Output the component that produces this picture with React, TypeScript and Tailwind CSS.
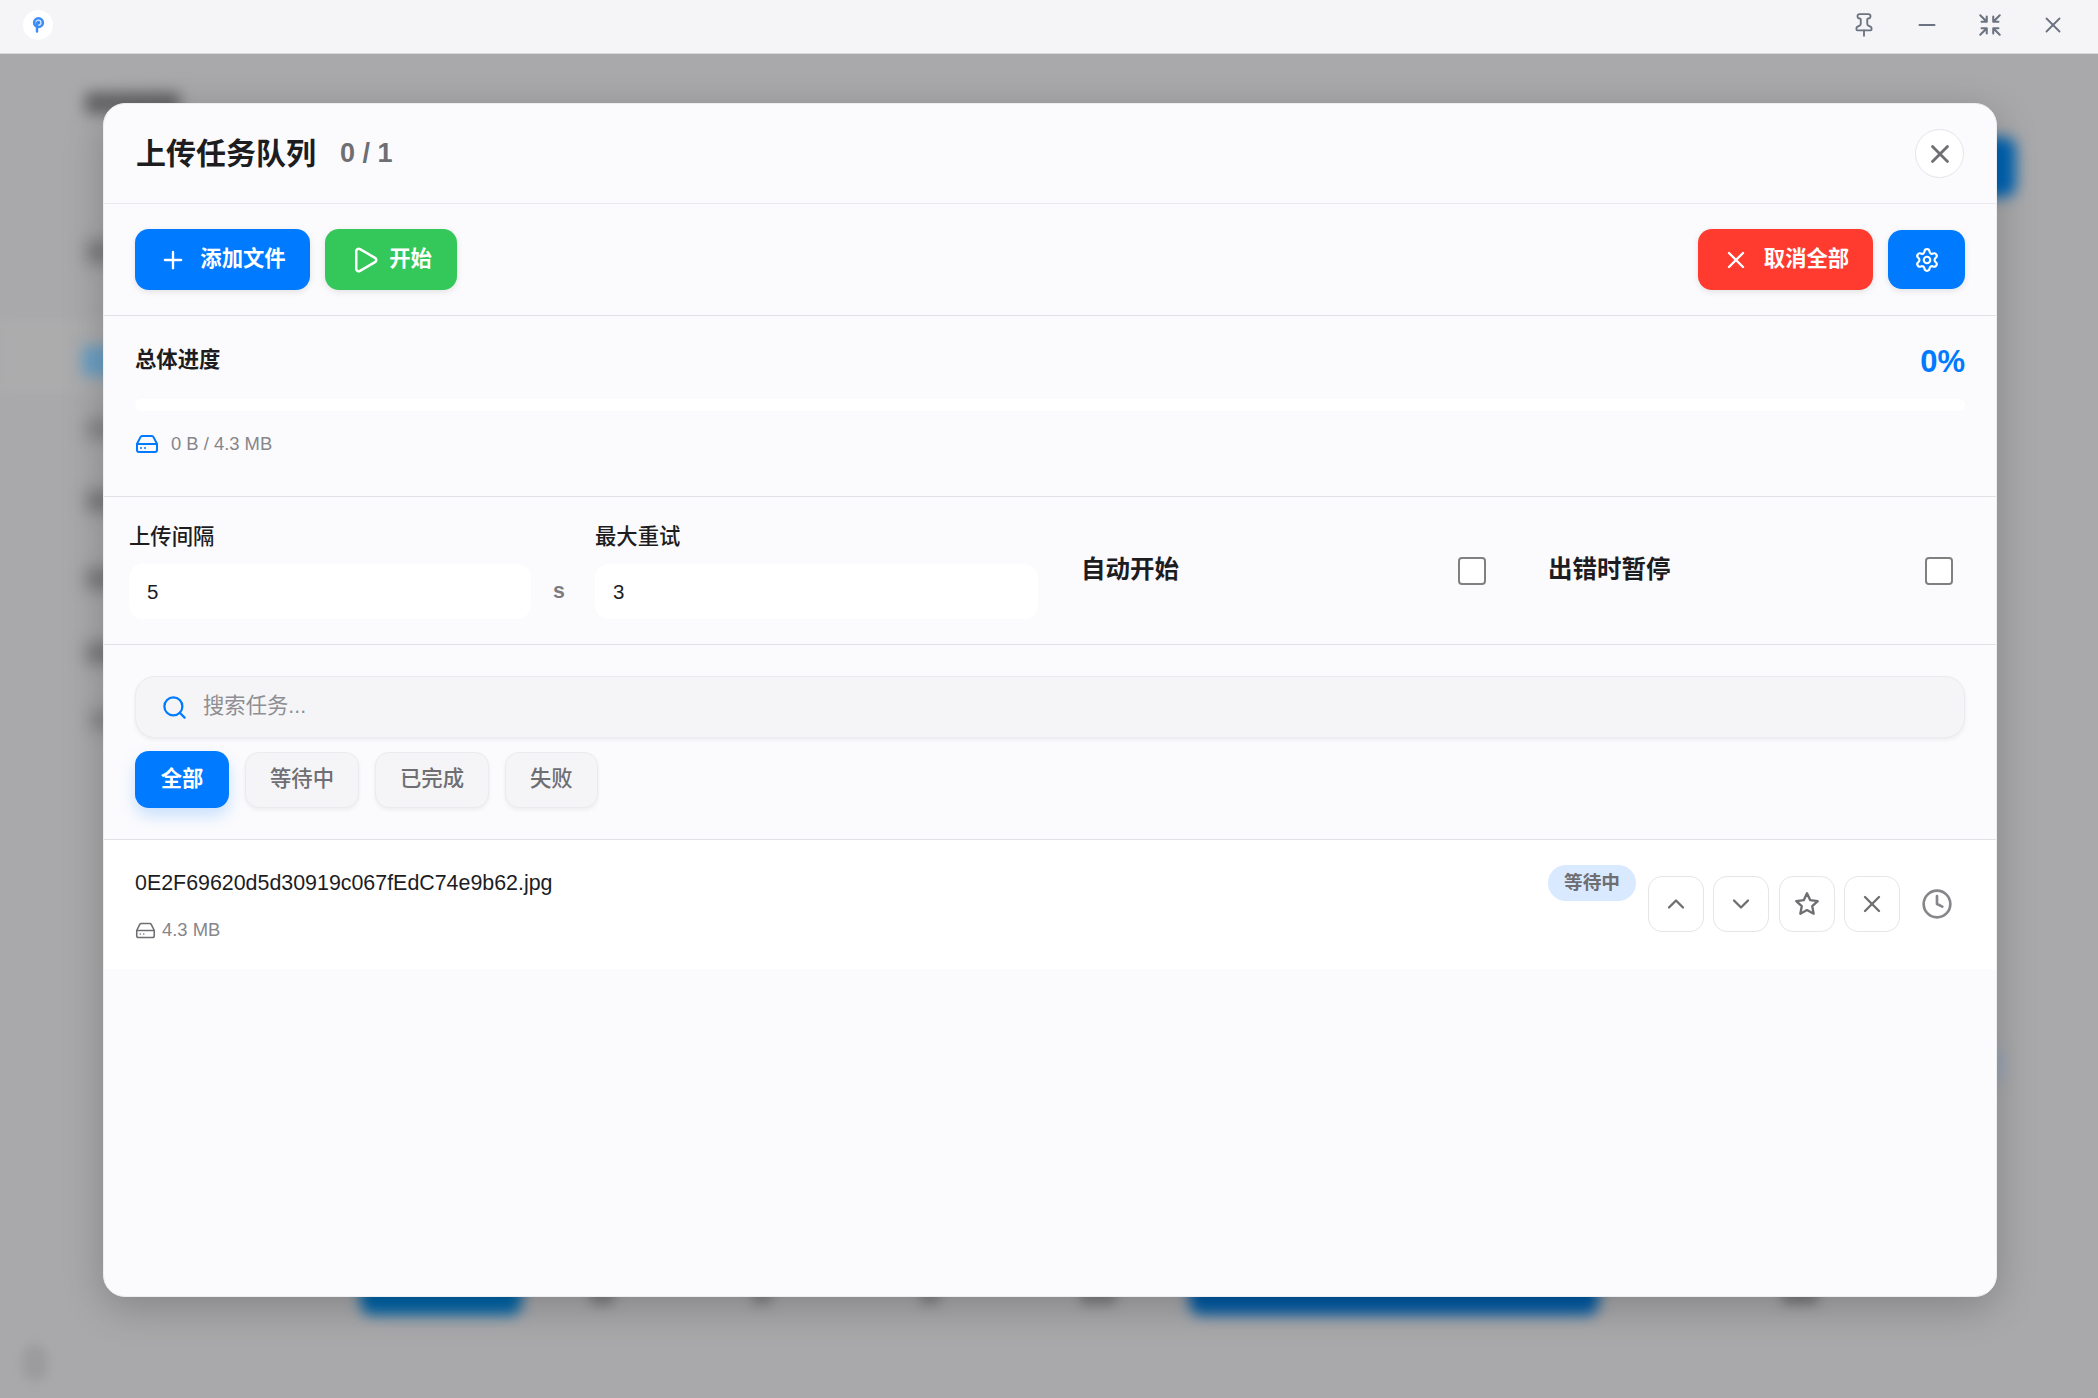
import { ChevronDown, ChevronUp, Clock, HardDrive, Minus, Pin, Play, Plus, Search, Settings, Shrink, X } from 'lucide-react';

const filters = ['等待中', '已完成', '失败'];

function TitleBar() {
  return (
    <div className="relative z-20 flex h-[54px] items-center justify-between border-b border-[#d9d9dc] bg-[#f5f5f7] pb-[4px] pl-[23px] pr-[32px]">
      <div className="flex h-[30px] w-[30px] items-center justify-center rounded-full bg-white">
        <svg viewBox="0 0 16 18" className="h-[17px] w-[15px]" fill="none">
          <circle cx="8" cy="7" r="6" fill="#3b8cf5" />
          <circle cx="8" cy="7" r="2.6" fill="none" stroke="#d5e7ff" strokeWidth="1.4" />
          <path d="M6.4 7v9.5" stroke="#3b8cf5" strokeWidth="2.6" strokeLinecap="round" />
        </svg>
      </div>
      <div className="flex items-center gap-[37px] text-[#6b7280]">
        <Pin className="h-[26px] w-[26px]" strokeWidth={1.7} />
        <Minus className="h-[26px] w-[26px]" strokeWidth={1.7} />
        <Shrink className="h-[26px] w-[26px]" strokeWidth={1.9} />
        <X className="h-[26px] w-[26px]" strokeWidth={1.7} />
      </div>
    </div>
  );
}

// blurred page behind the dialog
function BlurredPage() {
  return (
    <div className="absolute inset-0 overflow-hidden bg-[#a9a9ab]">
      <div className="absolute left-0 top-[318px] h-[76px] w-[110px] bg-[#acacad] blur-[6px]" />
      <div className="absolute left-[85px] top-[92px] h-[22px] w-[95px] rounded bg-[#666668] blur-[7px]" />
      <div className="absolute left-[86px] top-[240px] h-[24px] w-[40px] rounded bg-[#7e7e80] blur-[8px]" />
      <div className="absolute left-[82px] top-[346px] h-[30px] w-[40px] rounded bg-[#6a9fc4] blur-[7px]" />
      <div className="absolute left-[86px] top-[418px] h-[22px] w-[40px] rounded bg-[#88888a] blur-[8px]" />
      <div className="absolute left-[86px] top-[490px] h-[22px] w-[40px] rounded bg-[#7c7c7e] blur-[8px]" />
      <div className="absolute left-[86px] top-[568px] h-[22px] w-[40px] rounded bg-[#7a7a7c] blur-[8px]" />
      <div className="absolute left-[86px] top-[642px] h-[22px] w-[40px] rounded bg-[#7a7a7c] blur-[8px]" />
      <div className="absolute left-[90px] top-[710px] h-[20px] w-[30px] rounded bg-[#88888a] blur-[8px]" />
      <div className="absolute left-[1960px] top-[137px] h-[60px] w-[56px] rounded-xl bg-[#0064b4] blur-[7px]" />
      <div className="absolute left-[1985px] top-[1050px] h-[32px] w-[18px] rounded bg-[#98a4b8] blur-[7px]" />
      <div className="absolute left-[360px] top-[1270px] h-[45px] w-[162px] rounded-xl bg-[#0064a8] blur-[7px]" />
      <div className="absolute left-[1189px] top-[1270px] h-[45px] w-[410px] rounded-xl bg-[#005aa4] blur-[7px]" />
      <div className="absolute left-[590px] top-[1285px] h-[20px] w-[24px] rounded bg-[#808082] blur-[6px]" />
      <div className="absolute left-[752px] top-[1285px] h-[20px] w-[20px] rounded bg-[#858587] blur-[6px]" />
      <div className="absolute left-[920px] top-[1285px] h-[20px] w-[20px] rounded bg-[#858587] blur-[6px]" />
      <div className="absolute left-[1080px] top-[1285px] h-[20px] w-[36px] rounded bg-[#808082] blur-[6px]" />
      <div className="absolute left-[1782px] top-[1285px] h-[20px] w-[36px] rounded bg-[#7c7c7e] blur-[6px]" />
      <div className="absolute left-[22px] top-[1345px] h-[36px] w-[26px] rounded-full bg-[#9c9c9e] blur-[5px]" />
    </div>
  );
}

function IconButton({ children }: { children: React.ReactNode }) {
  return (
    <button className="flex h-[56px] w-[56px] items-center justify-center rounded-[14px] border border-[#e5e5ea] bg-white text-[#6e6e73]">
      {children}
    </button>
  );
}

function Star({ className }: { className: string }) {
  return (
    <svg className={className} viewBox="0 0 24 24" fill="none" stroke="currentColor" strokeWidth={2} strokeLinejoin="round" strokeLinecap="round">
      <path d="M12 2.8l2.8 5.9 6.4.8-4.7 4.4 1.2 6.4-5.7-3.1-5.7 3.1 1.2-6.4-4.7-4.4 6.4-.8z" />
    </svg>
  );
}

function UploadDialog() {
  return (
    <div className="flex h-[1194px] w-[1894px] flex-col overflow-hidden rounded-[22px] border border-[#eeeef1] bg-[#fbfbfd] shadow-[0_10px_40px_rgba(0,0,0,0.22)]">
      {/* Header */}
      <div className="flex h-[100px] flex-none items-center justify-between border-b border-[#e9e9ee] pl-[32px] pr-[32px]">
        <div className="flex items-center">
          <h2 className="text-[30px] font-bold text-[#1d1d1f]">上传任务队列</h2>
          <span className="ml-[24px] text-[27px] font-bold text-[#6e6e73]">0 / 1</span>
        </div>
        <button className="flex h-[49px] w-[49px] items-center justify-center rounded-full border border-[#e5e5ea] bg-white text-[#6e6e73]">
          <X className="h-[30px] w-[30px]" strokeWidth={2.2} />
        </button>
      </div>

      {/* Toolbar */}
      <div className="flex h-[112px] flex-none items-center justify-between border-b border-[#e1e1e6] pl-[31px] pr-[31px]">
        <div className="flex items-center gap-[15px]">
          <button className="flex h-[61px] w-[175px] items-center justify-center gap-[13px] rounded-[14px] bg-[#007aff] text-[21.33px] font-bold text-white shadow-[0_2px_6px_rgba(0,0,0,0.1)]">
            <Plus className="h-[28px] w-[28px]" strokeWidth={2} />
            添加文件
          </button>
          <button className="flex h-[61px] w-[132px] items-center justify-center gap-[9px] rounded-[14px] bg-[#34c759] text-[21.33px] font-bold text-white shadow-[0_2px_6px_rgba(0,0,0,0.1)]">
            <Play className="h-[30px] w-[30px]" strokeWidth={2} />
            开始
          </button>
        </div>
        <div className="flex items-center gap-[15px]">
          <button className="flex h-[61px] w-[175px] items-center justify-center gap-[14px] rounded-[14px] bg-[#ff3b30] text-[21.33px] font-bold text-white shadow-[0_2px_6px_rgba(0,0,0,0.1)]">
            <X className="h-[28px] w-[28px]" strokeWidth={2} />
            取消全部
          </button>
          <button className="flex h-[59px] w-[77px] items-center justify-center rounded-[14px] bg-[#007aff] text-white shadow-[0_2px_6px_rgba(0,0,0,0.1)]">
            <Settings className="h-[26px] w-[26px]" strokeWidth={2} />
          </button>
        </div>
      </div>

      {/* Overall progress */}
      <div className="h-[181px] flex-none border-b border-[#e1e1e6] px-[31px] pt-[25px]">
        <div className="flex h-[40px] items-center justify-between">
          <span className="text-[21.33px] font-bold text-[#1d1d1f]">总体进度</span>
          <span className="translate-y-[1px] text-[31px] font-bold text-[#007aff]">0%</span>
        </div>
        <div className="mt-[18px] h-[12px] rounded-full bg-white" />
        <div className="mt-[19px] flex items-center gap-[12px] text-[18.4px] text-[#86868b]">
          <HardDrive className="h-[24px] w-[24px] text-[#007aff]" strokeWidth={2} />
          0 B / 4.3 MB
        </div>
      </div>

      {/* Options */}
      <div className="grid h-[148px] flex-none grid-cols-[466px_486px_467px_405px] items-center border-b border-[#e1e1e6] pl-[25px]">
        <div>
          <label className="block text-[21.33px] font-medium leading-[30px] text-[#1d1d1f]">上传间隔</label>
          <div className="mt-[12px] flex items-center">
            <input defaultValue="5" className="h-[55px] w-[402px] rounded-[14px] bg-white px-[18px] text-[20.5px] text-[#1d1d1f] outline-none" />
            <span className="ml-[22px] text-[21.33px] font-bold text-[#7c7c80]">s</span>
          </div>
        </div>
        <div>
          <label className="block text-[21.33px] font-medium leading-[30px] text-[#1d1d1f]">最大重试</label>
          <input defaultValue="3" className="mt-[12px] block h-[55px] w-[443px] rounded-[14px] bg-white px-[18px] text-[20.5px] text-[#1d1d1f] outline-none" />
        </div>
        <label className="flex w-[405px] items-center justify-between text-[24.5px] font-bold text-[#1d1d1f]">
          <span>自动开始</span>
          <input type="checkbox" className="h-[28px] w-[28px] appearance-none rounded-[4px] border-2 border-[#808080] bg-white" />
        </label>
        <label className="flex w-[405px] items-center justify-between text-[24.5px] font-bold text-[#1d1d1f]">
          <span>出错时暂停</span>
          <input type="checkbox" className="h-[28px] w-[28px] appearance-none rounded-[4px] border-2 border-[#808080] bg-white" />
        </label>
      </div>

      {/* Search + filters */}
      <div className="h-[195px] flex-none border-b border-[#e1e1e6] px-[31px] pt-[31px]">
        <div className="flex h-[62px] items-center gap-[15px] rounded-[20px] border border-[#ebebef] bg-[#f5f5f7] pl-[25px] shadow-[0_2px_4px_rgba(0,0,0,0.06)]">
          <Search className="h-[27px] w-[27px] text-[#007aff]" strokeWidth={2} />
          <input placeholder="搜索任务..." className="flex-1 bg-transparent text-[21.33px] outline-none placeholder:text-[#8e8e93]" />
        </div>
        <div className="mt-[13px] flex items-center gap-[16px]">
          <button className="flex h-[57px] w-[94px] items-center justify-center rounded-[14px] bg-[#007aff] text-[21.33px] font-bold text-white shadow-[0_8px_16px_rgba(0,122,255,0.2)]">
            全部
          </button>
          {filters.map((f) => (
            <button key={f} className="flex h-[56px] items-center justify-center rounded-[14px] border border-[#ebebef] bg-[#f5f5f7] px-[24px] pt-[1px] text-[21.33px] font-medium text-[#6e6e73] shadow-[0_2px_4px_rgba(0,0,0,0.06)]">
              {f}
            </button>
          ))}
        </div>
      </div>

      {/* Task list */}
      <div className="flex-1">
        <div className="flex h-[129px] items-start justify-between bg-white pl-[31px] pr-[43px] pt-[25px]">
          <div>
            <div className="mt-[3px] text-[21.4px] leading-[30px] text-[#1d1d1f]">0E2F69620d5d30919c067fEdC74e9b62.jpg</div>
            <div className="mt-[20px] flex items-center gap-[6px] text-[18.4px] leading-[24px] text-[#86868b]">
              <HardDrive className="h-[21px] w-[21px] text-[#6e6e73]" strokeWidth={1.8} />
              4.3 MB
            </div>
          </div>
          <div className="flex items-start">
            <span className="flex h-[36px] w-[88px] items-center justify-center rounded-full bg-[#d9e9ff] text-[18.67px] font-bold text-[#6e6e73]">等待中</span>
            <div className="ml-[12px] mt-[11px] flex items-center gap-[9.33px]">
              <IconButton><ChevronUp className="h-[28px] w-[28px]" strokeWidth={2} /></IconButton>
              <IconButton><ChevronDown className="h-[28px] w-[28px]" strokeWidth={2} /></IconButton>
              <IconButton><Star className="h-[28px] w-[28px]" /></IconButton>
              <IconButton><X className="h-[28px] w-[28px]" strokeWidth={2} /></IconButton>
              <Clock className="ml-[11.67px] h-[32px] w-[32px] text-[#86868b]" strokeWidth={2} />
            </div>
          </div>
        </div>
      </div>
    </div>
  );
}

export default function App() {
  return (
    <div className="relative h-[1398px] w-[2098px] overflow-hidden bg-[#f5f5f7] font-['Liberation_Sans','Noto_Sans_CJK_SC',sans-serif]">
      <BlurredPage />
      <TitleBar />
      <div className="absolute inset-0 z-10 flex items-center justify-center pl-[2px] pt-[2px]">
        <UploadDialog />
      </div>
    </div>
  );
}
